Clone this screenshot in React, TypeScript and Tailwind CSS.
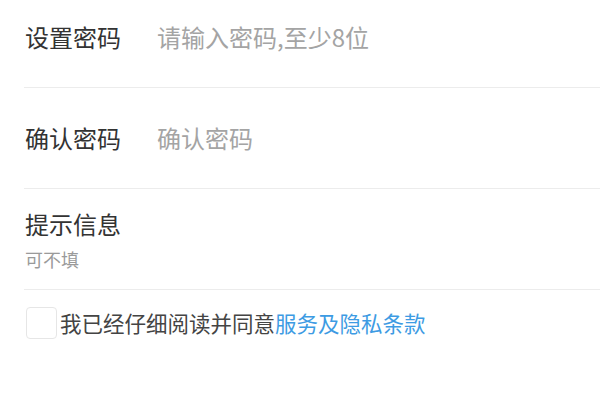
const font = { fontFamily: '"Noto Sans CJK SC", "Noto Sans", sans-serif' };

function Field({ label, placeholder }: { label: string; placeholder: string }) {
  return (
    <div className="flex h-[101px] items-center border-b border-[#ececec] pl-[1px]">
      <span className="w-[132px] shrink-0 text-[24px] text-[#333]">{label}</span>
      <span className="text-[24px] text-[#a4a4a4]">{placeholder}</span>
    </div>
  );
}

export default function App() {
  return (
    <div className="h-[400px] w-[600px] overflow-hidden bg-white" style={font}>
      <div className="-mt-[13px] pl-[24px]">
        <Field label="设置密码" placeholder="请输入密码,至少8位" />
        <Field label="确认密码" placeholder="确认密码" />

        {/* hint, optional */}
        <div className="flex h-[101px] flex-col justify-center border-b border-[#ececec] pl-[1px]">
          <span className="text-[24px] leading-[34px] text-[#333]">提示信息</span>
          <span className="mt-[6px] text-[18px] leading-[24px] text-[#9a9a9a]">可不填</span>
        </div>

        <div className="flex items-center pt-[17px] pl-[2px]">
          <span className="h-[32px] w-[31px] shrink-0 rounded-[4px] border border-[#e6e6e6] bg-white" />
          <span className="ml-[3px] text-[21.5px] text-[#444]">
            我已经仔细阅读并同意
            <span className="text-[#3d9be3]">服务及隐私条款</span>
          </span>
        </div>
      </div>
    </div>
  );
}
